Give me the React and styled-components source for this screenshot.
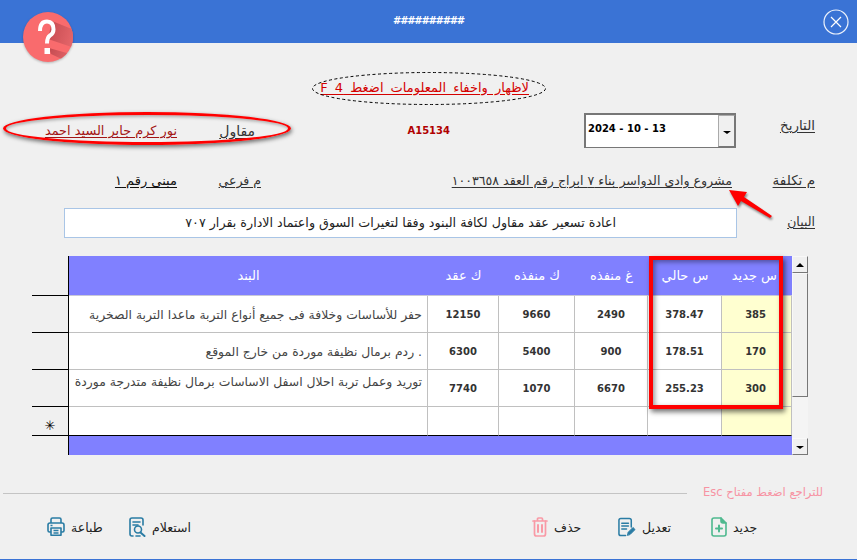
import React from "react";
import styled, { createGlobalStyle } from "styled-components";

const Global = createGlobalStyle`
  html, body { margin: 0; padding: 0; background: #f0f0f0; }
  * { box-sizing: border-box; }
`;

const Page = styled.div`
  position: relative;
  width: 857px;
  height: 560px;
  overflow: hidden;
  background: #f0f0f0;
  border-bottom: 1px solid #3a73d5;
  font-family: "DejaVu Sans", sans-serif;
  font-size: 11px;
  color: #333;
`;

const Header = styled.header`
  height: 43px;
  background: #3a73d5;
  display: flex;
  align-items: center;
  justify-content: center;
  position: relative;
`;

const Title = styled.div`
  color: #fff;
  font-size: 10px;
  font-weight: bold;
  letter-spacing: -1.3px;
  margin-top: -2px;
`;

const CloseIcon = styled.svg`
  position: absolute;
  right: 8px;
  top: 9px;
`;

const Badge = styled.svg`
  position: absolute;
  left: 22px;
  top: 11px;
  filter: drop-shadow(0 1px 1px rgba(0, 0, 0, 0.25));
`;

const Row = styled.div`
  display: flex;
  align-items: center;
  height: ${(p) => p.$h}px;
  margin-top: ${(p) => p.$top}px;
`;

const Slot = styled.div`
  flex: none;
  width: ${(p) => p.$w}px;
  margin-left: ${(p) => p.$ml}px;
  margin-top: ${(p) => p.$shift || 0}px;
  direction: rtl;
  text-align: right;
  white-space: nowrap;
  display: flex;
  justify-content: flex-start;
`;

const Text = styled.span`
  font-size: ${(p) => p.$size || 13}px;
  color: ${(p) => p.$color || "#333"};
  text-decoration: ${(p) => (p.$plain ? "none" : "underline")};
  text-underline-offset: 2px;
  font-weight: ${(p) => (p.$bold ? "bold" : "normal")};
  word-spacing: ${(p) => p.$words || 0}px;
`;

const DateBox = styled.div`
  flex: none;
  width: 152px;
  height: 35px;
  margin-left: 134px;
  background: #fff;
  border: 1px solid #777;
  border-top-width: 2px;
  border-left-width: 2px;
  display: flex;
  justify-content: space-between;
  color: #000;
  font-weight: bold;
  padding-left: 2px;
`;

const DateValue = styled.span`
  margin-top: 8px;
  white-space: nowrap;
  font-size: 10px;
`;

const DropButton = styled.div`
  width: 17px;
  background: #f0f0f0;
  border: 1px solid #aaa;
  border-right-color: #777;
  border-bottom-color: #777;
  display: flex;
  align-items: center;
  justify-content: center;
`;

const DownArrow = styled.i`
  width: 0;
  height: 0;
  border-left: 4px solid transparent;
  border-right: 4px solid transparent;
  border-top: 3px solid #000;
  margin-top: 2px;
`;

const UpArrow = styled.i`
  width: 0;
  height: 0;
  border-left: 4px solid transparent;
  border-right: 4px solid transparent;
  border-bottom: 4px solid #000;
`;

const NoteInput = styled.div`
  flex: none;
  width: 673px;
  height: 30px;
  margin-left: 64px;
  background: #fff;
  border: 1px solid #a9c5e6;
  direction: rtl;
  padding: 0 120px 0 0;
  line-height: 27px;
  color: #222;
  font-size: 12.7px;
  white-space: nowrap;
`;

const TableWrap = styled.div`
  display: flex;
  margin: 18px 0 0 32px;
  height: 199px;
`;

const Grid = styled.div`
  display: grid;
  grid-template-columns: 37px 359px 71px 76px 73px 74px 70px;
  grid-template-rows: 40px 37px 37px 37px 29px 19px;
  width: 760px;
`;

const Selector = styled.div`
  border-right: 1px solid #000;
  border-bottom: 1px solid #000;
  font-size: 13px;
  color: #000;
  display: flex;
  align-items: flex-end;
  justify-content: center;
  padding-bottom: 3px;
  line-height: 13px;
`;

const HeadCell = styled.div`
  background: #8080ff;
  border-bottom: 1px solid #c8c8d8;
  color: #fff;
  direction: rtl;
  display: flex;
  align-items: center;
  justify-content: ${(p) => (p.$start ? "flex-start" : "center")};
  padding-right: ${(p) => (p.$start ? 15 : 0)}px;
  padding-bottom: 1px;
  font-size: 13px;
  white-space: nowrap;
`;

const Cell = styled.div`
  background: ${(p) => (p.$yellow ? "#ffffd0" : "#fff")};
  border-right: 1px solid #c0c0c0;
  border-bottom: ${(p) => (p.$last ? "1px solid #000" : "1px solid #c0c0c0")};
  direction: rtl;
  display: flex;
  white-space: nowrap;
`;

const ItemCell = styled(Cell)`
  justify-content: flex-start;
  align-items: ${(p) => (p.$high ? "flex-start" : "center")};
  padding: ${(p) => (p.$high ? "4px" : "0")} 5px 0 0;
  font-size: 12.4px;
  color: #444;
`;

const NumberCell = styled(Cell)`
  direction: ltr;
  justify-content: ${(p) => (p.$yellow ? "flex-end" : "center")};
  align-items: center;
  padding-right: ${(p) => (p.$yellow ? 25 : 0)}px;
  font-size: 10px;
  font-weight: bold;
  color: #333;
`;

const FootBar = styled.div`
  background: #8080ff;
  grid-column: 2 / -1;
`;

const FootSelector = styled.div`
  border-right: 1px solid #000;
`;

const ScrollBar = styled.div`
  flex: none;
  width: 16px;
  height: 199px;
  display: flex;
  flex-direction: column;
  background-color: #f4f4f4;
  background-image: radial-gradient(#d8d8d8 0.5px, transparent 0.6px);
  background-size: 2px 2px;
`;

const ScrollButton = styled.div`
  height: 17px;
  flex: none;
  background: #f0f0f0;
  border: 1px solid #f8f8f8;
  border-right-color: #777;
  border-bottom-color: #777;
  display: flex;
  align-items: center;
  justify-content: center;
`;

const Thumb = styled.div`
  height: 124px;
  flex: none;
  background: #f0f0f0;
  border: 1px solid #f8f8f8;
  border-right-color: #777;
  border-bottom-color: #777;
`;

const Track = styled.div`
  flex: 1;
`;

const Rule = styled.div`
  flex: none;
  width: 684px;
  height: 1px;
  margin-left: 3px;
  margin-top: 2px;
  background: #c4c4c4;
`;

const EscHint = styled.div`
  flex: none;
  width: 119px;
  margin-left: 17px;
  margin-top: -1px;
  direction: rtl;
  white-space: nowrap;
  color: #f793a3;
  font-size: 11.5px;
`;

const Action = styled.button`
  flex: none;
  width: ${(p) => p.$w}px;
  margin-left: ${(p) => p.$ml}px;
  padding: 0;
  border: 0;
  background: none;
  font: inherit;
  font-size: 12.5px;
  color: #222;
  display: flex;
  align-items: center;
  gap: 6px;
  white-space: nowrap;

  svg {
    flex: none;
  }
`;

const HintOval = styled.svg`
  position: absolute;
  left: 312px;
  top: 72px;
`;

const NameOval = styled.div`
  position: absolute;
  left: 3px;
  top: 112px;
  width: 288px;
  height: 33px;
  border: 3px solid #f00;
  border-radius: 50%;
  box-shadow: 1px 2px 4px rgba(0, 0, 0, 0.55), inset 1px 2px 3px rgba(0, 0, 0, 0.25);
`;

const RedFrame = styled.div`
  position: absolute;
  left: 649px;
  top: 256px;
  width: 134px;
  height: 153px;
  border: 4px solid #f00;
  box-shadow: 2px 3px 5px rgba(0, 0, 0, 0.55), inset 2px 2px 5px rgba(0, 0, 0, 0.4);
`;

const Arrow = styled.svg`
  position: absolute;
  left: 725px;
  top: 186px;
  filter: drop-shadow(1px 2px 1px rgba(0, 0, 0, 0.45));
`;

const PrintIcon = () => (
  <svg width="18" height="20" viewBox="0 0 18 20" fill="none" stroke="#2a7ca4" strokeWidth="1.6" strokeLinejoin="round">
    <path d="M4 6V2.500Q4 1 5.500 1h7Q14 1 14 2.500V6" />
    <path d="M4 15H2.500Q1 15 1 13.500V8Q1 6 3 6h12q2 0 2 2v5.500Q17 15 15.500 15H14" />
    <path d="M4 11h10v7.200H4z" />
    <path d="M6.500 13.500h5M6.500 16h5M3.500 8.500h2" />
  </svg>
);

const InquiryIcon = () => (
  <svg width="17" height="20" viewBox="0 0 17 20" fill="none" stroke="#2a7ca4" strokeWidth="1.6" strokeLinecap="round">
    <path d="M4 19H3Q1 19 1 17V3Q1 1 3 1h9q2 0 2 2v5" />
    <path d="M4 5h7M4 8h5" />
    <circle cx="9" cy="12.500" r="3.500" />
    <path d="M11.500 15.500 15.500 19" strokeWidth="2" />
    <path d="M7 19h4" />
  </svg>
);

const TrashIcon = () => (
  <svg width="16" height="20" viewBox="0 0 16 20" fill="none" stroke="#f99aa6" strokeWidth="1.7" strokeLinecap="round">
    <path d="M1 4h14M5.500 4V2q0-1 1-1h3q1 0 1 1v2" />
    <path d="M2.500 4v13q0 2 2 2h7q2 0 2-2V4" />
    <path d="M6 8v7M10 8v7" strokeWidth="2" />
  </svg>
);

const EditIcon = () => (
  <svg width="18" height="20" viewBox="0 0 19 20" fill="none" stroke="#2a7ca4" strokeWidth="1.6" strokeLinecap="round">
    <path d="M8 19H3Q1 19 1 17V3Q1 1 3 1h9q2 0 2 2v7" />
    <path d="M4 6h7M4 9h7M4 12h5" />
    <path d="M10 18.500l.8-3 5-5 2.200 2.200-5 5z" fill="#2a7ca4" strokeWidth="1" />
  </svg>
);

const NewIcon = () => (
  <svg width="16" height="20" viewBox="0 0 16 20" fill="none" stroke="#4fb98f" strokeWidth="1.6" strokeLinecap="round" strokeLinejoin="round">
    <path d="M10 1H3Q1 1 1 3v14q0 2 2 2h10q2 0 2-2V6z" />
    <path d="M10 1v3q0 2 2 2h3" fill="#4fb98f" />
    <path d="M8 8.500v6M5 11.500h6" strokeWidth="2" />
  </svg>
);

const rows = [
  { item: "حفر للأساسات وخلافة فى جميع أنواع التربة ماعدا التربة الصخرية", contract: "12150", done: "9660", left: "2490", cur: "378.47", next: "385" },
  { item: ". ردم برمال نظيفة موردة من خارج الموقع", contract: "6300", done: "5400", left: "900", cur: "178.51", next: "170" },
  { item: "توريد وعمل تربة احلال اسفل الاساسات برمال نظيفة متدرجة موردة", contract: "7740", done: "1070", left: "6670", cur: "255.23", next: "300", high: true },
];

export default function App() {
  return (
    <Page>
      <Global />
      <Header>
        <Title>##########</Title>
        <CloseIcon width="26" height="26" viewBox="0 0 26 26" fill="none" stroke="#fff">
          <circle cx="13" cy="13" r="12" strokeWidth="1.2" opacity="0.9" />
          <path d="M8 8l10 10M18 8L8 18" strokeWidth="1.2" />
        </CloseIcon>
      </Header>
      <Badge width="52" height="52" viewBox="0 0 52 52">
        <defs>
          <clipPath id="disc"><circle cx="26" cy="26" r="25" /></clipPath>
          <linearGradient id="fall" x1="0" y1="0" x2="1" y2="0.3">
            <stop offset="0" stopColor="#c44a50" />
            <stop offset="1" stopColor="#e5666a" />
          </linearGradient>
        </defs>
        <circle cx="26" cy="26" r="25" fill="#f96b6d" />
        <g clipPath="url(#disc)">
          <path d="M30 10 L55 20 L55 38 L26 28z" fill="url(#fall)" />
          <path d="M27 37 L29 43 L48 52 L52 44z" fill="url(#fall)" />
        </g>
        <path d="M18 20q0-9.500 7-9.500 6.500 0 6.500 8 0 4-3.500 6-3 2-3 8" fill="none" stroke="#fff" strokeWidth="4" />
        <rect x="22.500" y="37" width="5.500" height="6" fill="#fff" />
      </Badge>

      <Row $h={20} $top={34}>
        <Slot $w={207} $ml={322}>
          <Text $color="#d40000" $words={3}>لاظهار واخفاء المعلومات اضغط F 4</Text>
        </Slot>
      </Row>

      <Row $h={35} $top={16}>
        <Slot $w={131} $ml={46}><Text $color="#a31515" $size={12.9}>نور كرم جابر السيد احمد</Text></Slot>
        <Slot $w={36} $ml={42}><Text $size={14}>مقاول</Text></Slot>
        <Slot $w={47} $ml={148}><Text $plain $bold $color="#b00000" $size={10}>A15134</Text></Slot>
        <DateBox>
          <DateValue>2024 - 10 - 13</DateValue>
          <DropButton><DownArrow /></DropButton>
        </DateBox>
        <Slot $w={35} $ml={44} $shift={-11}><Text $size={13.5}>التاريخ</Text></Slot>
      </Row>

      <Row $h={20} $top={22}>
        <Slot $w={62} $ml={115}><Text $color="#111">مبنى رقم ١</Text></Slot>
        <Slot $w={43} $ml={41}><Text $size={12.5}>م فرعي</Text></Slot>
        <Slot $w={280} $ml={191}><Text $size={12.6}>مشروع وادى الدواسر بناء ٧ ابراج رقم العقد ١٠٠٣٦٥٨</Text></Slot>
        <Slot $w={44} $ml={39}><Text $size={13.5}>م تكلفة</Text></Slot>
      </Row>

      <Row $h={30} $top={18}>
        <NoteInput>اعادة تسعير عقد مقاول لكافة البنود وفقا لتغيرات السوق واعتماد الادارة بقرار ٧٠٧</NoteInput>
        <Slot $w={30} $ml={48} $shift={-4}><Text $size={12.5}>البيان</Text></Slot>
      </Row>

      <TableWrap>
        <Grid>
          <Selector />
          <HeadCell>البند</HeadCell>
          <HeadCell>ك عقد</HeadCell>
          <HeadCell>ك منفذه</HeadCell>
          <HeadCell>غ منفذه</HeadCell>
          <HeadCell>س حالي</HeadCell>
          <HeadCell $start>س جديد</HeadCell>
          {rows.map((r) => (
            <React.Fragment key={r.contract}>
              <Selector />
              <ItemCell $high={r.high}>{r.item}</ItemCell>
              <NumberCell>{r.contract}</NumberCell>
              <NumberCell>{r.done}</NumberCell>
              <NumberCell>{r.left}</NumberCell>
              <NumberCell>{r.cur}</NumberCell>
              <NumberCell $yellow>{r.next}</NumberCell>
            </React.Fragment>
          ))}
          <Selector>✳</Selector>
          <ItemCell $last />
          <NumberCell $last />
          <NumberCell $last />
          <NumberCell $last />
          <NumberCell $last />
          <NumberCell $last $yellow />
          <FootSelector />
          <FootBar />
        </Grid>
        <ScrollBar>
          <ScrollButton><UpArrow /></ScrollButton>
          <Thumb />
          <Track />
          <ScrollButton><DownArrow /></ScrollButton>
        </ScrollBar>
      </TableWrap>

      <Row $h={20} $top={27}>
        <Rule />
        <EscHint>للتراجع اضغط مفتاح Esc</EscHint>
      </Row>

      <Row $h={24} $top={13}>
        <Action $w={54} $ml={47}><PrintIcon />طباعة</Action>
        <Action $w={61} $ml={28}><InquiryIcon />استعلام</Action>
        <Action $w={46} $ml={342}><TrashIcon />حذف</Action>
        <Action $w={52} $ml={40}><EditIcon />تعديل</Action>
        <Action $w={44} $ml={41}><NewIcon />جديد</Action>
      </Row>

      <HintOval width="236" height="34" viewBox="0 0 236 34" fill="none">
        <ellipse cx="117" cy="16.500" rx="116.500" ry="16" stroke="#000" strokeWidth="1" strokeDasharray="3 2.500" />
      </HintOval>
      <NameOval />
      <RedFrame />
      <Arrow width="50" height="36" viewBox="0 0 50 36">
        <path d="M4 4 L22 6 L19 11 L47 30 L45 32 L16 15 L13 20z" fill="#f00" />
      </Arrow>
    </Page>
  );
}
